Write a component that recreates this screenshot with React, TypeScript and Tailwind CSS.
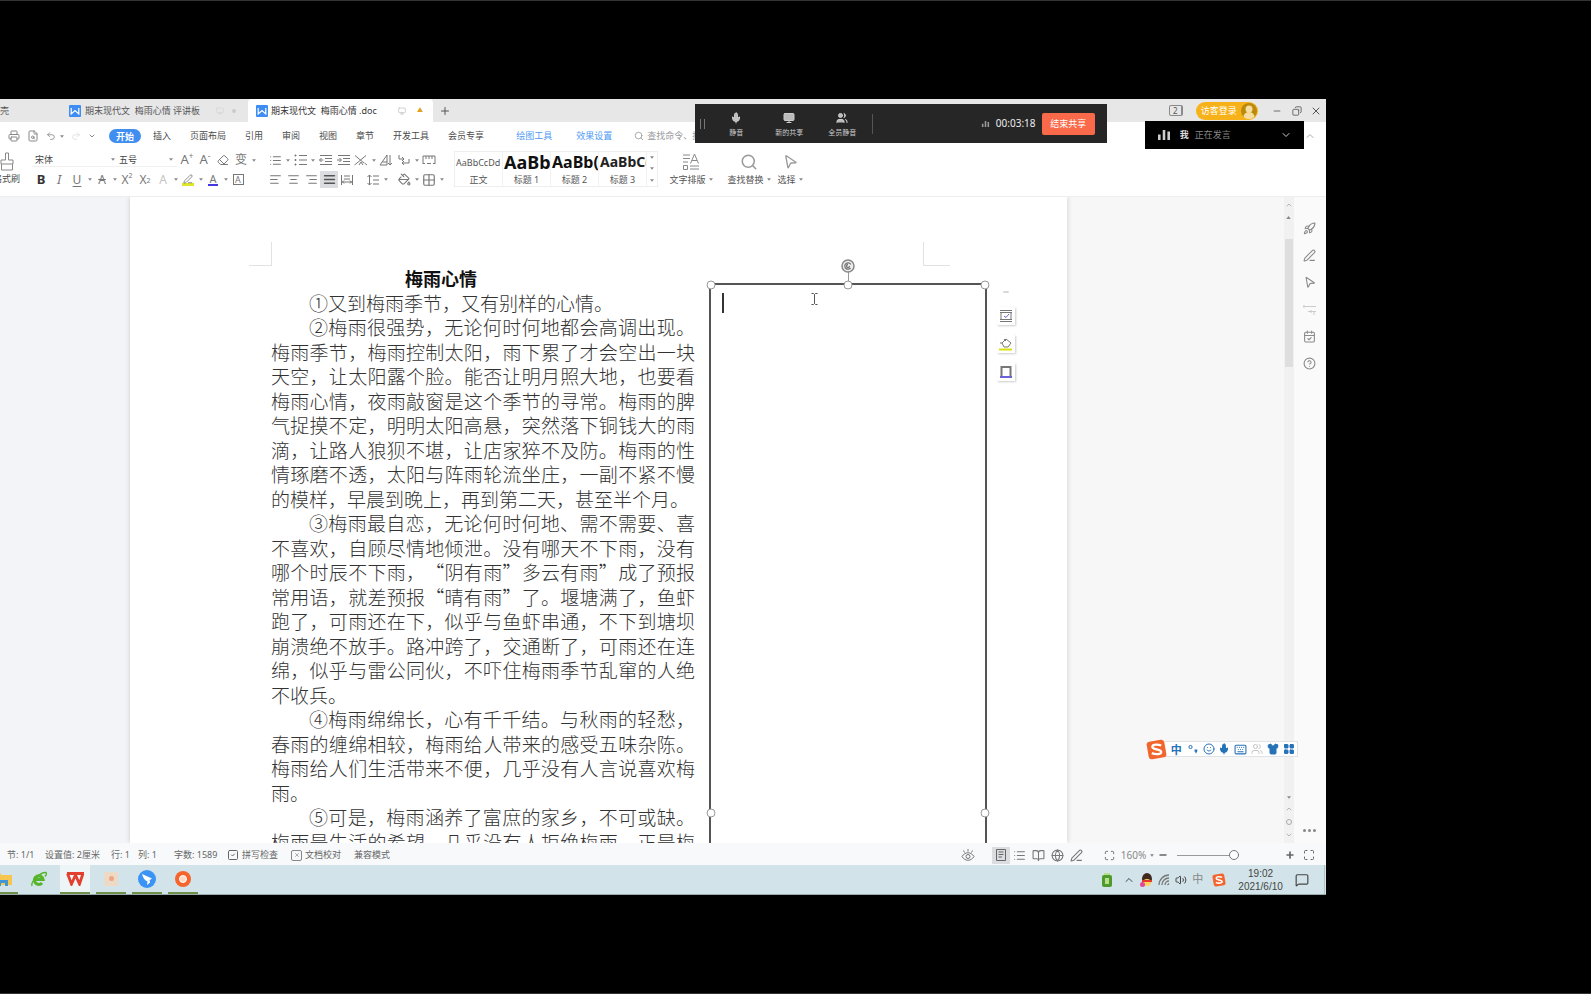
import type { ReactNode } from 'react'
import {
  AlignCenter,
  AlignJustify,
  AlignLeft,
  AlignRight,
  BookOpen,
  CalendarCheck,
  ChevronDown,
  ChevronUp,
  CircleQuestionMark,
  Copy,
  Eraser,
  FileSearch,
  Globe,
  Grid2x2,
  LayoutGrid,
  List,
  Maximize,
  MessageSquare,
  Mic,
  Minus,
  Monitor,
  MousePointer2,
  PaintBucket,
  PenLine,
  Plus,
  Printer,
  Redo2,
  Rocket,
  Search,
  Shirt,
  Smile,
  SquareCheck,
  Undo2,
  Users,
  Volume2,
  X,
  Keyboard,
} from 'lucide-react'

const tabs = ['插入', '页面布局', '引用', '审阅', '视图', '章节', '开发工具', '会员专享']

type Line = { text: string; indent?: boolean; last?: boolean }

const lines: Line[] = [
  { text: '①又到梅雨季节，又有别样的心情。', indent: true, last: true },
  { text: '②梅雨很强势，无论何时何地都会高调出现。', indent: true },
  { text: '梅雨季节，梅雨控制太阳，雨下累了才会空出一块' },
  { text: '天空，让太阳露个脸。能否让明月照大地，也要看' },
  { text: '梅雨心情，夜雨敲窗是这个季节的寻常。梅雨的脾' },
  { text: '气捉摸不定，明明太阳高悬，突然落下铜钱大的雨' },
  { text: '滴，让路人狼狈不堪，让店家猝不及防。梅雨的性' },
  { text: '情琢磨不透，太阳与阵雨轮流坐庄，一副不紧不慢' },
  { text: '的模样，早晨到晚上，再到第二天，甚至半个月。', last: true },
  { text: '③梅雨最自恋，无论何时何地、需不需要、喜', indent: true },
  { text: '不喜欢，自顾尽情地倾泄。没有哪天不下雨，没有' },
  { text: '哪个时辰不下雨，“阴有雨”多云有雨”成了预报' },
  { text: '常用语，就差预报“晴有雨”了。堰塘满了，鱼虾' },
  { text: '跑了，可雨还在下，似乎与鱼虾串通，不下到塘坝' },
  { text: '崩溃绝不放手。路冲跨了，交通断了，可雨还在连' },
  { text: '绵，似乎与雷公同伙，不吓住梅雨季节乱窜的人绝' },
  { text: '不收兵。', last: true },
  { text: '④梅雨绵绵长，心有千千结。与秋雨的轻愁，', indent: true },
  { text: '春雨的缠绵相较，梅雨给人带来的感受五味杂陈。' },
  { text: '梅雨给人们生活带来不便，几乎没有人言说喜欢梅' },
  { text: '雨。', last: true },
  { text: '⑤可是，梅雨涵养了富庶的家乡，不可或缺。', indent: true },
  { text: '梅雨是生活的希望，几乎没有人拒绝梅雨，正是梅' },
]

function Caret() {
  return (
    <svg viewBox="0 0 6 4" className="h-[3px] w-[4px] shrink-0 fill-[#888]">
      <path d="M0 0h6L3 4z" />
    </svg>
  )
}

function Tool({ label, menu, active, children }: { label: string; menu?: boolean; active?: boolean; children: ReactNode }) {
  return (
    <button aria-label={label} className="flex h-[19px] shrink-0 items-center text-[#777]">
      <span className={`flex h-[17px] w-[18px] items-center justify-center ${active ? 'bg-[#dcdde0]' : ''}`}>{children}</span>
      {menu && (
        <span className="flex w-[7px] justify-center">
          <Caret />
        </span>
      )}
    </button>
  )
}

function WLogo() {
  return (
    <svg viewBox="0 0 12 12" className="size-3 shrink-0">
      <rect width="12" height="12" rx="1" fill="#3f8cf3" />
      <path d="M2.200 3v6l3.800-3.400L9.800 9V3" fill="none" stroke="#fff" strokeWidth="1.200" />
    </svg>
  )
}

function SogouLogo({ className }: { className: string }) {
  return (
    <svg viewBox="0 0 20 20" className={className}>
      <rect x="1.500" y="1.500" width="17" height="17" rx="3" fill="#f2652d" transform="rotate(-10 10 10)" />
      <path d="M14.500 6.200C11 4.800 6 5 6 7.600c0 2.800 8.500 1.800 8.500 4.700 0 2.600-5.500 2.700-9 1.200" fill="none" stroke="#fff" strokeWidth="2.200" />
    </svg>
  )
}

function Bars({ className }: { className: string }) {
  return (
    <svg viewBox="0 0 12 10" className={className}>
      <path d="M0 4.500h2.600V10H0zM4.700 0h2.600v10H4.700zM9.400 1.500H12V10H9.400z" />
    </svg>
  )
}

function TitleBar() {
  return (
    <div className="flex h-[23px] shrink-0 items-stretch bg-[#e7e7e8] text-[#555]">
      <div className="flex w-[60px] items-center">壳</div>
      <button className="flex w-[188px] items-center gap-1 pr-3 pl-[9px]">
        <WLogo />
        <span className="flex-1 text-left whitespace-pre">期末现代文  梅雨心情 评讲板</span>
        <Monitor className="size-2 text-[#d4d4d4]" />
        <span className="ml-1 size-1 rounded-full bg-[#ccc]" />
      </button>
      <button className="flex w-[185px] items-center gap-[3px] rounded-t bg-white pr-[10px] pl-2 text-[#333]">
        <WLogo />
        <span className="flex-1 text-left whitespace-pre">期末现代文  梅雨心情 .doc</span>
        <Monitor className="size-2 text-[#bbb]" />
        <span className="ml-2 text-[6px] text-[#e0a020]">▲</span>
      </button>
      <button aria-label="新建标签" className="flex w-6 items-center justify-center">
        <Plus className="size-3" />
      </button>
      <div className="ml-auto flex items-center pr-1">
        <button aria-label="窗口数" className="mr-[13px] flex h-[11px] w-[14px] items-center justify-center rounded-xs border border-r-2 border-[#8a8a8a] text-[8px] leading-none">
          2
        </button>
        <button className="mr-3 flex h-[18px] items-center gap-1 rounded-full bg-[#f8b219] pr-px pl-[5px] text-white">
          访客登录
          <svg viewBox="0 0 16 16" className="size-4">
            <circle cx="8" cy="8" r="8" fill="#b98a0c" />
            <circle cx="8" cy="6" r="3.500" fill="#f7dca0" />
            <path d="M2.500 14a5.500 5 0 0 1 11 0 8 8 0 0 1-11 0z" fill="#f7dca0" />
          </svg>
        </button>
        <button aria-label="最小化" className="flex w-[14px] justify-center"><Minus className="size-[10px]" /></button>
        <button aria-label="还原" className="flex w-[26px] justify-center"><Copy className="size-[10px] rotate-90" /></button>
        <button aria-label="关闭" className="flex w-3 justify-center"><X className="size-3" /></button>
      </div>
    </div>
  )
}

function MenuBar() {
  return (
    <nav className="flex h-7 shrink-0 items-center bg-white text-[#4a4a4a]">
      <div className="flex w-[109px] items-center gap-[7px] pl-2 text-[#888]">
        <button aria-label="打印"><Printer className="size-3" /></button>
        <button aria-label="预览"><FileSearch className="size-3" /></button>
        <button aria-label="撤销" className="flex items-center gap-1"><Undo2 className="size-[10px]" /><Caret /></button>
        <button aria-label="恢复"><Redo2 className="size-[10px] text-[#ddd]" /></button>
        <button aria-label="更多"><ChevronDown className="size-2" strokeWidth={3} /></button>
      </div>
      <button className="h-[14px] w-8 rounded-full bg-[#3f8ef0] leading-none font-bold text-white">开始</button>
      <div className="ml-3 flex gap-[19px]">
        {tabs.map((t) => (
          <button key={t}>{t}</button>
        ))}
      </div>
      <div className="ml-8 flex gap-6 text-[#4f9bf5]">
        <button>绘图工具</button>
        <button>效果设置</button>
      </div>
      <label className="ml-[22px] flex items-center gap-[3px] text-[#999]">
        <Search className="size-[10px]" />
        <input aria-label="查找命令" placeholder="查找命令、搜索模板" className="w-24 placeholder:text-[#999]" />
      </label>
      <button aria-label="收起功能区" className="mr-[10px] ml-auto text-[#aaa]"><ChevronUp className="size-3" /></button>
    </nav>
  )
}

function FontGroup() {
  return (
    <div className="ml-3 w-[234px] shrink-0">
      <div className="flex h-5 items-center">
        <label className="flex w-[85px] items-center border-b border-[#f0f0f0] pr-[2px]">
          <select aria-label="字体" className="flex-1 appearance-none pl-[3px] text-[#444]">
            <option>宋体</option>
          </select>
          <Caret />
        </label>
        <label className="mr-px flex w-[60px] items-center border-b border-[#f0f0f0] pr-1">
          <select aria-label="字号" className="flex-1 appearance-none pl-[2px] text-[#444]">
            <option>五号</option>
          </select>
          <Caret />
        </label>
        <Tool label="增大字号"><span className="text-[13px]">A</span><sup className="text-[8px]">+</sup></Tool>
        <Tool label="减小字号"><span className="text-[13px]">A</span><sup className="text-[8px]">-</sup></Tool>
        <Tool label="清除格式"><Eraser className="size-3" /></Tool>
        <Tool label="拼音指南" menu><span className="text-[12px]">变</span></Tool>
      </div>
      <div className="flex h-[19px] items-center">
        <Tool label="加粗"><span className="text-[13px] font-bold text-[#333]">B</span></Tool>
        <Tool label="倾斜"><span className="text-[13px] italic">I</span></Tool>
        <Tool label="下划线" menu><span className="text-[12px] underline underline-offset-2">U</span></Tool>
        <Tool label="删除线" menu><span className="text-[12px] line-through">A</span></Tool>
        <Tool label="上标"><span className="text-[12px]">X</span><sup className="text-[7px]">2</sup></Tool>
        <Tool label="下标"><span className="text-[12px]">X</span><sub className="text-[7px]">2</sub></Tool>
        <Tool label="文字效果" menu><span className="text-[12px] text-[#c4c4c4]">A</span></Tool>
        <Tool label="突出显示" menu><span className="flex h-3 w-3 justify-center border-b-[3px] border-[#dfe62a]"><PenLine className="size-[10px]" /></span></Tool>
        <Tool label="字体颜色" menu><span className="flex h-3 w-[10px] items-center justify-center border-b-2 border-[#4338e0] text-[11px] leading-none">A</span></Tool>
        <Tool label="字符底纹"><span className="flex h-[11px] w-[11px] items-center justify-center border border-[#777] text-[9px] leading-none">A</span></Tool>
      </div>
    </div>
  )
}

function ParagraphGroup() {
  return (
    <div className="w-[188px] shrink-0">
      <div className="flex h-5 items-center">
        <Tool label="项目符号" menu><List className="size-[13px]" /></Tool>
        <Tool label="编号" menu>
          <svg viewBox="0 0 13 12" className="h-3 w-[13px] fill-none stroke-current">
            <path d="M5 1.500h8M5 6h8M5 10.500h8M.5 1.500h2M1.500.500v2M.500 6h2M.500 10.500h2M1.500 5v2M1.500 9.500v2" />
          </svg>
        </Tool>
        <Tool label="减少缩进">
          <svg viewBox="0 0 13 12" className="h-3 w-[13px] fill-none stroke-current">
            <path d="M1 1.500h12M6 4.500h7M6 7.500h7M1 10.500h12M4.500 6H.500M2.500 4l-2 2 2 2" />
          </svg>
        </Tool>
        <Tool label="增加缩进">
          <svg viewBox="0 0 13 12" className="h-3 w-[13px] fill-none stroke-current">
            <path d="M1 1.500h12M6 4.500h7M6 7.500h7M1 10.500h12M0 6h4M2.500 4l2 2-2 2" />
          </svg>
        </Tool>
        <Tool label="中文版式" menu>
          <svg viewBox="0 0 14 12" className="h-3 w-[14px] fill-none stroke-current">
            <path d="M1 1.500 10 9M12 1.500 3 9M.5 11l2.500-2M10.500 9l2.500 2M5 11l2-3 2 3" />
          </svg>
        </Tool>
        <Tool label="排序">
          <svg viewBox="0 0 14 12" className="h-3 w-[14px] fill-none stroke-current">
            <path d="M1 11 8 1v10M3.500 8H8M1 11h7M11 1v10M9 9l2 2 2-2" />
          </svg>
        </Tool>
        <Tool label="显示标记" menu>
          <svg viewBox="0 0 12 12" className="size-3 fill-none stroke-current">
            <path d="M1 1v4h5M4 3l2 2-2 2M11 5v4H4M6 7 4 9l2 2" />
          </svg>
        </Tool>
        <Tool label="制表位">
          <svg viewBox="0 0 14 12" className="h-3 w-[14px] fill-none stroke-current">
            <path d="M1 10V2h12v8M4 2v3M7 2v3M10 2v3M1 9.500h2M11 9.500h2M5 9.500h4" />
          </svg>
        </Tool>
      </div>
      <div className="flex h-[19px] items-center">
        <Tool label="左对齐"><AlignLeft className="size-[13px]" /></Tool>
        <Tool label="居中"><AlignCenter className="size-[13px]" /></Tool>
        <Tool label="右对齐"><AlignRight className="size-[13px]" /></Tool>
        <Tool label="两端对齐" active><AlignJustify className="size-[13px] text-[#555]" strokeWidth={3} /></Tool>
        <Tool label="分散对齐">
          <svg viewBox="0 0 12 12" className="size-3 fill-none stroke-current">
            <path d="M.5 1v10M11.500 1v10M3 2h6M3 5h6M1 8h10M3 6.500 1.500 8 3 9.500M9 6.500 10.500 8 9 9.500" />
          </svg>
        </Tool>
        <div className="ml-2 flex">
          <Tool label="行距" menu>
            <svg viewBox="0 0 12 12" className="size-3 fill-none stroke-current">
              <path d="M2.500 1v10M.5 3l2-2 2 2M.5 9l2 2 2-2M6 2h6M6 6h6M6 10h6" />
            </svg>
          </Tool>
        </div>
        <div className="ml-[6px] flex">
          <Tool label="底纹" menu><PaintBucket className="size-[13px]" /></Tool>
          <Tool label="边框" menu><Grid2x2 className="size-[14px]" /></Tool>
        </div>
      </div>
    </div>
  )
}

function Ribbon() {
  return (
    <div className="flex h-[47px] shrink-0 border-b border-[#eee] bg-white">
      <button className="flex w-5 flex-col items-end whitespace-nowrap text-[#4a4a4a]">
        <svg viewBox="0 0 16 20" className="mt-[2px] mr-[5px] h-5 w-4 shrink-0 fill-none stroke-[#888]">
          <path d="M6.500 1h3v7h4.500v4H2V8h4.500zM2.500 12v6h11v-6" />
        </svg>
        格式刷
      </button>
      <FontGroup />
      <ParagraphGroup />
      <div className="mt-px flex h-9 w-[204px] shrink-0 border border-[#eee]">
        <StyleItem name="正文" sample="AaBbCcDd" size="text-[9px] text-[#555]" />
        <StyleItem name="标题 1" sample="AaBb" size="text-[18px] font-bold text-[#111]" />
        <StyleItem name="标题 2" sample="AaBb(" size="text-[16px] font-bold text-[#111]" />
        <StyleItem name="标题 3" sample="AaBbC(" size="text-[14px] font-bold text-[#222]" />
        <div className="flex w-[10px] flex-col items-center justify-around">
          <Caret />
          <Caret />
          <Caret />
        </div>
      </div>
      <BigTool label="文字排版" width="w-[66px]">
        <svg viewBox="0 0 18 18" className="size-[18px] fill-none stroke-[#888]">
          <path d="M1 2h7M1 5.500h7M1 9h5M8.500 10.500 12.500 1l4 9.500M10 7.500h5M1.500 12.500h4v4h-4zM8 13h9M8 16h9" />
        </svg>
      </BigTool>
      <BigTool label="查找替换" width="w-[50px]"><Search className="size-[18px] text-[#999]" /></BigTool>
      <BigTool label="选择" width="w-8"><MousePointer2 className="size-4 rotate-12 text-[#999]" /></BigTool>
    </div>
  )
}

function StyleItem({ name, sample, size }: { name: string; sample: string; size: string }) {
  return (
    <button className="flex w-12 shrink-0 flex-col items-center overflow-hidden border-r border-[#f2f2f2] text-[#555]">
      <span className={`flex h-[22px] w-full items-center pl-px leading-none ${size}`}>{sample}</span>
      {name}
    </button>
  )
}

function BigTool({ label, width, children }: { label: string; width: string; children: ReactNode }) {
  return (
    <button className={`flex flex-col items-center text-[#555] ${width}`}>
      <span className="flex h-[23px] items-center">{children}</span>
      <span className="flex items-center gap-[3px] whitespace-nowrap">{label}<Caret /></span>
    </button>
  )
}

function Handle({ place }: { place: string }) {
  return <span className={`absolute size-[9px] -translate-1/2 rounded-full border border-[#999] bg-white ${place}`} />
}

function TextBox() {
  return (
    <div className="relative mt-[17px] ml-[14px] h-[1060px] w-[278px] shrink-0 border-2 border-[#555]">
      <span className="absolute -top-4 left-1/2 h-4 w-px bg-[#999]" />
      <svg viewBox="0 0 14 14" className="absolute -top-[26px] left-1/2 size-[14px] -translate-x-1/2">
        <circle cx="7" cy="7" r="6" fill="#eee" stroke="#888" strokeWidth="1.500" />
        <path d="M9.500 9a3.200 3.200 0 1 1 .3-3.500M7 5.500A1.500 1.500 0 1 0 8.500 7" fill="none" stroke="#777" strokeWidth="1.300" />
      </svg>
      <Handle place="top-0 left-0" />
      <Handle place="top-0 left-1/2" />
      <Handle place="top-0 left-full" />
      <Handle place="top-1/2 left-0" />
      <Handle place="top-1/2 left-full" />
      <div className="mt-2 ml-[11px] h-5 w-[2px] bg-[#333]" />
      <svg viewBox="0 0 7 12" className="absolute top-2 left-[100px] h-3 w-[7px] fill-none stroke-[#555]">
        <path d="M.5.5h2l1 1 1-1h2M3.500 1.500v9M.5 11.500h2l1-1 1 1h2" />
      </svg>
    </div>
  )
}

function Page() {
  return (
    <div className="flex w-[937px] shrink-0 flex-col bg-white shadow-[0_0_5px_#ccc]">
      <div className="flex h-[69px] shrink-0 items-end justify-between pr-[117px] pl-[119px]">
        <div className="h-6 w-[23px] border-r border-b border-[#e2e2e2]" />
        <div className="h-6 w-[27px] border-b border-l border-[#e2e2e2]" />
      </div>
      <div className="flex items-start pl-[141px]">
        <article className="grid h-[588px] w-[424px] shrink-0 auto-rows-fr items-center text-[19px] leading-6 font-light text-[#333] [text-spacing-trim:space-all]">
          <h1 className="pl-[134px] text-[18px] font-bold text-[#111]">梅雨心情</h1>
          {lines.map((l) => (
            <p key={l.text} className={`whitespace-nowrap ${l.indent ? 'pl-[38px]' : ''} ${l.last ? '' : '[text-align-last:justify]'}`}>
              {l.text}
            </p>
          ))}
        </article>
        <TextBox />
        <div className="mt-[21px] ml-[10px] flex flex-col items-center gap-[10px] text-[#888]">
          <button aria-label="收起" className="flex h-[10px] items-center"><Minus className="size-2" /></button>
          <button aria-label="布局选项" className="flex size-[18px] items-center justify-center shadow-[1px_1px_2px_#ccc]">
            <svg viewBox="0 0 12 12" className="size-3 fill-none stroke-[#777]">
              <path d="M0 .5h12M0 2.500h12M0 9.500h12M0 11.500h12M1 2v8M11 2v8" />
              <path d="m4 6 2 1.500L9 4" stroke="#6a67c8" />
            </svg>
          </button>
          <button aria-label="形状填充" className="flex size-[18px] items-center justify-center shadow-[1px_1px_2px_#ccc]">
            <svg viewBox="0 0 14 14" className="size-[14px] fill-none stroke-[#777]">
              <path d="M1 6h2l4-4 5 4-3 4H5L3 6M5 2l2 2" />
              <path d="M0 12.500h13" stroke="#d8e010" strokeWidth="2" />
            </svg>
          </button>
          <button aria-label="形状轮廓" className="flex size-[18px] items-center justify-center shadow-[1px_1px_2px_#ccc]">
            <svg viewBox="0 0 12 12" className="size-3 fill-none stroke-[#777]">
              <path d="M1.500 10V1h9v9" strokeWidth="2" />
              <path d="M0 11h12" stroke="#6d63d8" strokeWidth="2" />
            </svg>
          </button>
        </div>
      </div>
    </div>
  )
}

function SideBar() {
  return (
    <>
      <div className="flex w-[10px] shrink-0 flex-col items-center bg-[#f1f1f1] pt-1 pb-1 text-[#999]">
        <ChevronUp className="size-2" />
        <svg viewBox="0 0 6 4" className="mt-[7px] h-[3px] w-[5px] fill-[#888]">
          <path d="M0 4h6L3 0z" />
        </svg>
        <div className="mt-5 h-32 w-2 bg-[#dedede]" />
        <div className="mt-auto flex flex-col items-center gap-[6px] text-[#999]">
          <Caret />
          <ChevronUp className="size-2" />
          <span className="size-[6px] rounded-full border border-[#aaa]" />
          <ChevronDown className="size-2" />
        </div>
      </div>
      <aside className="flex w-8 shrink-0 flex-col items-center gap-[14px] bg-[#fafafa] pt-[25px] pb-2 text-[#8a8a8a]">
        <button aria-label="快速启动"><Rocket className="size-[13px]" /></button>
        <button aria-label="编辑"><PenLine className="size-[13px]" /></button>
        <button aria-label="选择窗格"><MousePointer2 className="size-[13px] rotate-12" /></button>
        <button aria-label="属性" className="text-[#ccc]">
          <svg viewBox="0 0 13 13" className="size-[13px] fill-none stroke-current">
            <path d="M0 3.500h13M1 2v3M5 8.500h8M8 7v3M11 8v4" />
          </svg>
        </button>
        <button aria-label="任务"><CalendarCheck className="size-[13px]" /></button>
        <button aria-label="帮助"><CircleQuestionMark className="size-[13px]" /></button>
        <button aria-label="更多" className="mt-auto flex h-[10px] items-center gap-[2px]">
          <i className="size-[3px] rounded-full bg-[#888]" />
          <i className="size-[3px] rounded-full bg-[#888]" />
          <i className="size-[3px] rounded-full bg-[#888]" />
        </button>
      </aside>
    </>
  )
}

function StatusBar() {
  return (
    <footer className="flex h-[22px] shrink-0 items-center bg-[#f7f9fa] pt-[2px] pr-[11px] pl-[7px] whitespace-nowrap text-[#666]">
      <span className="w-[38px]">节: 1/1</span>
      <span className="w-[66px]">设置值: 2厘米</span>
      <span className="w-[27px]">行: 1</span>
      <span className="w-9">列: 1</span>
      <span className="w-[53px]">字数: 1589</span>
      <button className="flex w-16 items-center gap-[3px]"><SquareCheck className="size-3" />拼写检查</button>
      <button className="flex w-[63px] items-center gap-[3px]">
        <span className="flex size-[11px] items-center justify-center rounded-xs border border-[#888]"><X className="size-[6px]" /></span>
        文档校对
      </button>
      <span>兼容模式</span>
      <div className="ml-auto flex items-center">
        <button aria-label="护眼模式" className="mr-[17px]">
          <svg viewBox="0 0 14 12" className="h-3 w-[14px] fill-none stroke-[#777]">
            <path d="M1 7.500c3-5 9-5 12 0-3 5-9 5-12 0zM7 0v2.500M2.500 1.500l1 2M11.500 1.500l-1 2" />
            <circle cx="7" cy="7.500" r="2" />
          </svg>
        </button>
        <div className="flex gap-px">
          <Tool label="页面视图" active>
            <svg viewBox="0 0 12 12" className="size-3 fill-none stroke-[#666]">
              <path d="M1.500.5h9v11h-9zM3.500 3h5M3.500 5.500h5M3.500 8H7" />
            </svg>
          </Tool>
          <Tool label="大纲"><List className="size-[13px]" /></Tool>
          <Tool label="阅读版式"><BookOpen className="size-[13px]" /></Tool>
          <Tool label="网页版式"><Globe className="size-[13px]" /></Tool>
          <Tool label="写作模式"><PenLine className="size-[13px]" /></Tool>
        </div>
        <button aria-label="适应窗口" className="mr-[6px] ml-[18px]"><Maximize className="size-[11px]" /></button>
        <button className="flex w-[37px] items-center gap-1 text-[10px] text-[#888]">160%<Caret /></button>
        <button aria-label="缩小" className="mr-[9px]"><Minus className="size-[10px]" strokeWidth={4} /></button>
        <input
          type="range"
          aria-label="显示比例"
          defaultValue={100}
          className="h-3 w-[62px] appearance-none bg-[linear-gradient(#999,#999)] bg-size-[100%_1px] bg-center bg-no-repeat [&::-webkit-slider-thumb]:size-[10px] [&::-webkit-slider-thumb]:appearance-none [&::-webkit-slider-thumb]:rounded-full [&::-webkit-slider-thumb]:border [&::-webkit-slider-thumb]:border-[#777] [&::-webkit-slider-thumb]:bg-white"
        />
        <button aria-label="放大" className="mr-2 ml-[46px]"><Plus className="size-[10px]" strokeWidth={4} /></button>
        <button aria-label="全屏"><Maximize className="size-3" /></button>
      </div>
    </footer>
  )
}

function TaskApp({ label, look, children }: { label: string; look: string; children: ReactNode }) {
  return (
    <button aria-label={label} className={`flex h-full w-[30px] items-center justify-center border-b-2 ${look}`}>
      {children}
    </button>
  )
}

function TaskBar() {
  return (
    <div className="flex h-[30px] shrink-0 items-center border-b border-[#9aa] bg-[#d2e4e9] text-[#444]">
      <div className="-ml-3 flex h-full gap-[6px]">
        <TaskApp label="文件资源管理器" look="border-[#6f8f4a]">
          <svg viewBox="0 0 18 14" className="h-[14px] w-[18px]">
            <path d="M0 1h6l1.500 2H18v10H0z" fill="#f7c64f" />
            <path d="M4 14V8h10v6h-3v-3H7v3z" fill="#3f97d8" />
          </svg>
        </TaskApp>
        <TaskApp label="浏览器" look="border-transparent">
          <svg viewBox="0 0 16 16" className="size-4 fill-none stroke-[#56b52c]">
            <path d="M4 8.500h8A4.300 4.300 0 1 0 11 12" strokeWidth="3.200" />
            <path d="M1 15C-.5 11 9 1 15 1.500c.8 1 0 3-1 4" strokeWidth="1.400" />
          </svg>
        </TaskApp>
        <TaskApp label="WPS" look="border-[#6f8f4a] bg-[#edf5f7]">
          <svg viewBox="0 0 18 14" className="h-[14px] w-[18px] fill-none stroke-[#e23f2e]">
            <path d="M1 1.500h16L13.500 12 9.500 3M1.500 1.500 5.500 12l4-9" strokeWidth="2.800" />
          </svg>
        </TaskApp>
        <TaskApp label="图片" look="border-[#6f8f4a]">
          <span className="flex size-[14px] items-center justify-center bg-[#ecd9c6]"><i className="size-[5px] rounded-full bg-[#f0a585]" /></span>
        </TaskApp>
        <TaskApp label="钉钉" look="border-[#6f8f4a]">
          <svg viewBox="0 0 18 18" className="size-[18px]">
            <circle cx="9" cy="9" r="9" fill="#3b93f5" />
            <path d="m4 4 10 4.500-2.500 1.800.6 2.200L9 15l.5-3.500C7 10.500 5 8 4 4z" fill="#fff" />
          </svg>
        </TaskApp>
        <TaskApp label="录屏" look="border-[#6f8f4a]">
          <svg viewBox="0 0 16 16" className="size-4">
            <circle cx="8" cy="8" r="8" fill="#f6662c" />
            <circle cx="8" cy="8" r="3.500" fill="#ffd9c4" stroke="#fff" />
          </svg>
        </TaskApp>
      </div>
      <div className="ml-auto flex h-full items-center">
        <div className="mr-3 flex items-center gap-[5px]">
          <svg viewBox="0 0 10 14" className="mr-[6px] h-[14px] w-[10px]">
            <rect y="2" width="10" height="12" rx="2" fill="#4f9a2c" />
            <path d="M2 0h6v2H2zM3 5h4v6H3z" fill="#b8e08a" />
          </svg>
          <ChevronUp className="size-3" />
          <svg viewBox="0 0 13 14" className="h-[14px] w-[13px]">
            <ellipse cx="7" cy="6" rx="5" ry="6" fill="#40281e" />
            <ellipse cx="7" cy="9.500" rx="4" ry="3.500" fill="#ffd45c" />
            <path d="M2 7h10v2H2z" fill="#e23b2d" />
            <circle cx="2.500" cy="11.500" r="2.500" fill="#e3459b" />
          </svg>
          <svg viewBox="0 0 12 12" className="size-3 fill-none stroke-[#777]">
            <path d="M1 11A10 10 0 0 1 11 1M4 11a7 7 0 0 1 7-7M7 11a4 4 0 0 1 4-4M9.500 11 11 9.500" strokeWidth="1.300" />
          </svg>
          <Volume2 className="size-3" />
          <span className="w-3 text-[11px] text-[#888]">中</span>
          <SogouLogo className="ml-[3px] size-[14px]" />
        </div>
        <div className="text-center font-['Liberation_Sans',sans-serif] text-[10px] leading-[13px]">
          <div>19:02</div>
          <div>2021/6/10</div>
        </div>
        <button aria-label="通知" className="mr-[15px] ml-3"><MessageSquare className="size-[14px]" /></button>
        <span className="h-full w-[2px] border-l border-[#b3c3c8]" />
      </div>
    </div>
  )
}

function MeetingBar() {
  return (
    <div className="absolute top-[5px] right-[219px] flex h-[39px] w-[412px] items-center bg-[#262626] text-[7px] text-[#ccc]">
      <span className="ml-[5px] h-[10px] w-[5px] border-x border-[#777]" />
      <div className="ml-[5px] flex pt-1">
        <MeetingButton label="静音"><Mic className="size-3 fill-[#bbb]" /></MeetingButton>
        <MeetingButton label="新的共享"><Monitor className="size-3 fill-[#bbb]" /></MeetingButton>
        <MeetingButton label="全员静音"><Users className="size-3 fill-[#bbb]" /></MeetingButton>
      </div>
      <span className="ml-[3px] h-5 w-px bg-[#555]" />
      <Bars className="mr-[6px] ml-auto h-[6px] w-[9px] fill-[#999]" />
      <span className="w-[46px] text-[10px] text-[#eee]">00:03:18</span>
      <button className="mr-3 h-[22px] w-[53px] rounded-xs bg-[#f9694a] text-[9px] text-white">结束共享</button>
    </div>
  )
}

function MeetingButton({ label, children }: { label: string; children: ReactNode }) {
  return (
    <button className="flex w-[53px] flex-col items-center gap-[3px]">
      {children}
      <span className="leading-3">{label}</span>
    </button>
  )
}

function Speaker() {
  return (
    <div className="absolute top-[22px] right-[22px] flex h-7 w-[159px] items-center bg-black pr-3 pl-[13px] text-[#888]">
      <Bars className="h-[10px] w-3 fill-[#ccc]" />
      <span className="mr-[6px] ml-[10px] font-bold text-[#ddd]">我</span>
      <span>正在发言</span>
      <button aria-label="展开" className="ml-auto text-[#ccc]"><ChevronDown className="size-3" /></button>
    </div>
  )
}

function ImeBar() {
  return (
    <div className="absolute right-[28px] bottom-[138px] flex h-4 w-[142px] items-center border border-[#e0e3e6] bg-white pl-3 text-[#2672b8]">
      <SogouLogo className="absolute -top-[3px] -left-[11px] size-[21px]" />
      <div className="flex flex-1 items-center justify-around">
        <span className="w-3 text-[11px] leading-none font-bold">中</span>
        <svg viewBox="0 0 12 12" className="size-3">
          <circle cx="3.500" cy="4" r="1.600" fill="none" stroke="currentColor" />
          <path d="M7.500 6.500h2.800c.3 2-.6 3.500-2 4l.3-1.800h-1z" fill="currentColor" />
        </svg>
        <Smile className="size-3" />
        <Mic className="size-3 fill-current" />
        <Keyboard className="size-[13px]" />
        <Users className="size-3 text-[#c4c4c4]" />
        <Shirt className="size-3 fill-current" />
        <LayoutGrid className="size-3 fill-current" />
      </div>
    </div>
  )
}

export default function App() {
  return (
    <div
      lang="zh-CN"
      className="flex h-screen items-stretch border-y border-[#333] bg-black py-[98px] font-['Noto_Sans','Noto_Sans_CJK_SC',sans-serif]"
    >
      <main className="relative flex w-5/6 flex-col overflow-hidden bg-[#f7f7f8] text-[9px]">
        <TitleBar />
        <MenuBar />
        <Ribbon />
        <div className="flex min-h-0 flex-1 overflow-hidden font-['Noto_Sans_CJK_SC',sans-serif]">
          <div className="w-[130px] shrink-0 bg-[#f3f4f8]" />
          <Page />
          <div className="flex-1" />
          <SideBar />
        </div>
        <StatusBar />
        <TaskBar />
        <MeetingBar />
        <Speaker />
        <ImeBar />
      </main>
    </div>
  )
}
